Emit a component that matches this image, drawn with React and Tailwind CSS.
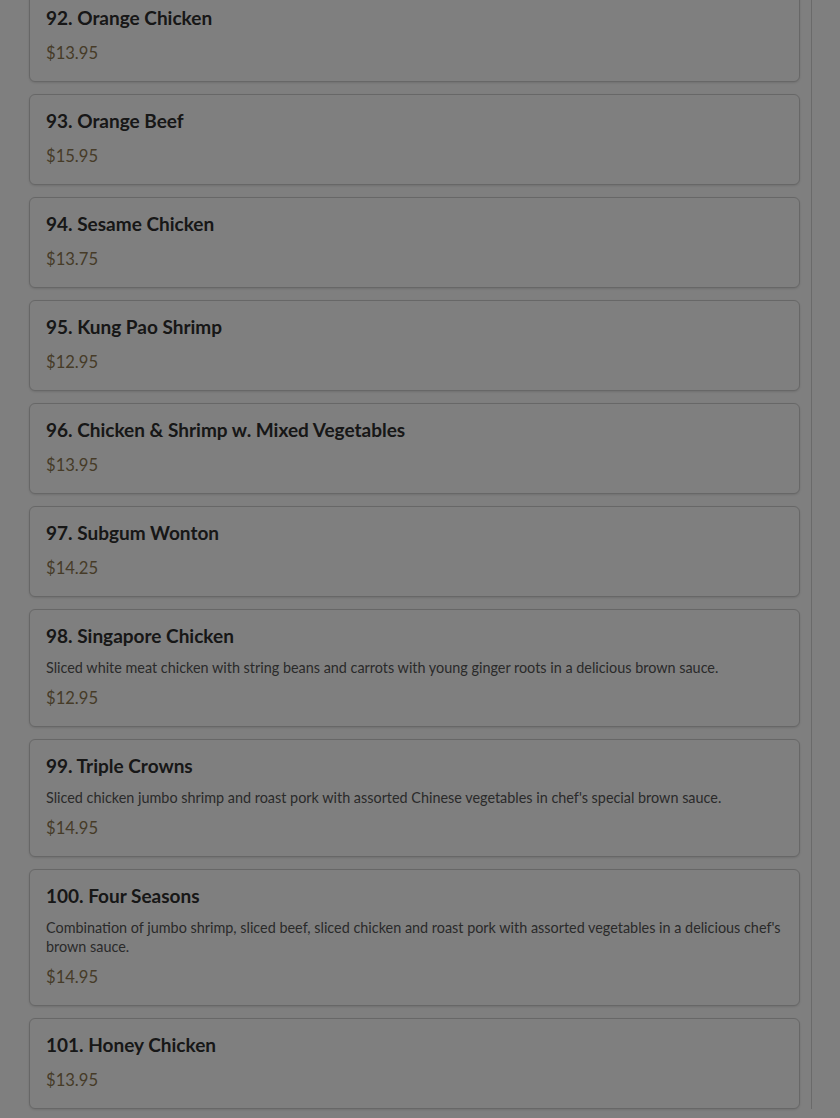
const ITEMS = [
  { no: 92, name: 'Orange Chicken', price: '13.95' },
  { no: 93, name: 'Orange Beef', price: '15.95' },
  { no: 94, name: 'Sesame Chicken', price: '13.75' },
  { no: 95, name: 'Kung Pao Shrimp', price: '12.95' },
  { no: 96, name: 'Chicken & Shrimp w. Mixed Vegetables', price: '13.95' },
  { no: 97, name: 'Subgum Wonton', price: '14.25' },
  { no: 98, name: 'Singapore Chicken', price: '12.95',
    desc: 'Sliced white meat chicken with string beans and carrots with young ginger roots in a delicious brown sauce.' },
  { no: 99, name: 'Triple Crowns', price: '14.95',
    desc: "Sliced chicken jumbo shrimp and roast pork with assorted Chinese vegetables in chef's special brown sauce." },
  { no: 100, name: 'Four Seasons', price: '14.95',
    desc: "Combination of jumbo shrimp, sliced beef, sliced chicken and roast pork with assorted vegetables in a delicious chef's brown sauce." },
  { no: 101, name: 'Honey Chicken', price: '13.95' },
];

export default function App() {
  return (
    <div className="relative h-screen overflow-hidden bg-white" style={{ fontFamily: 'Lato, "Noto Sans", sans-serif' }}>
      <div className="w-[812px] h-full border-r border-[#d4d4d4] pl-[29px] pr-[11px]">
        <div className="-mt-[9px] flex flex-col gap-3">
          {ITEMS.map(item => (
            <div key={item.no}
              className="bg-white border border-[#cfcfcf] rounded-md shadow-sm px-4 pt-[15px] pb-4">
              <h3 className="text-[19px] leading-[21px] font-bold text-[#2e2e2e] mb-3">
                {item.no}. {item.name}
              </h3>
              {item.desc && (
                <p className="text-[14.4px] leading-[19px] text-[#555] mb-2">{item.desc}</p>
              )}
              <div className="text-[16.6px] leading-6 pt-px text-[#8c7750]">${item.price}</div>
            </div>
          ))}
        </div>
      </div>

      {/* modal backdrop */}
      <div className="fixed inset-0 bg-black/50" />
    </div>
  );
}
